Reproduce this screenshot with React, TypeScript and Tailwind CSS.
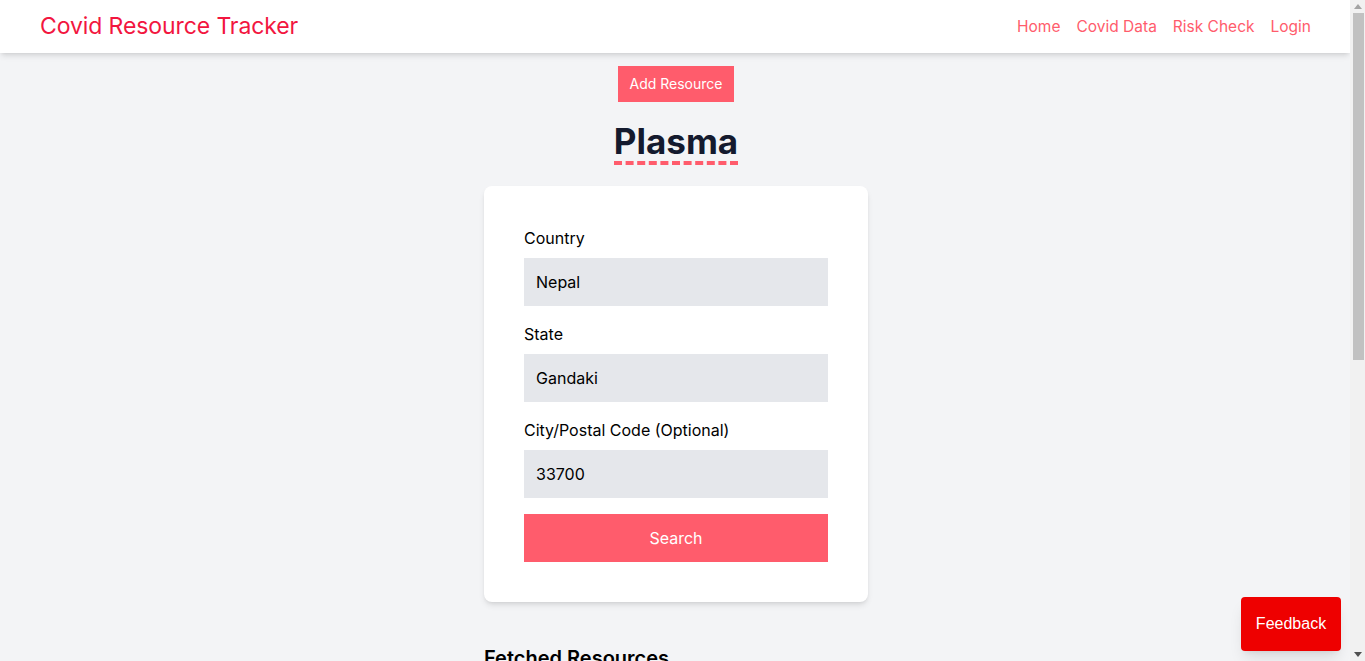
export default function App() {
  const fields = [
    { label: 'Country', value: 'Nepal' },
    { label: 'State', value: 'Gandaki' },
    { label: 'City/Postal Code (Optional)', value: '33700' },
  ];

  return (
    <div className="h-screen flex overflow-hidden bg-gray-100 font-['Inter',sans-serif]">
      <div className="flex-1 relative overflow-hidden">
        {/* Navbar */}
        <nav className="h-[53px] bg-white shadow-md flex items-center justify-between pl-10 pr-[39px]">
          <div className="text-[23px] text-[#f2163f] tracking-[-0.1px]">Covid Resource Tracker</div>
          <div className="flex items-center gap-4 text-[15.5px] text-[#ff5c6c]">
            <a>Home</a>
            <a>Covid Data</a>
            <a>Risk Check</a>
            <a>Login</a>
          </div>
        </nav>

        <main className="flex flex-col items-center pt-[13px] pl-[2px]">
          <button className="h-[36px] px-3 bg-[#ff5c6c] text-white text-sm">Add Resource</button>
          <h1 className="mt-[19px] text-[35px] font-bold text-[#141a2e] leading-[40px] border-b-4 border-dashed border-[#ff5c6c]">
            Plasma
          </h1>

          <div className="mt-[21px] w-96 bg-white rounded-lg shadow-md p-10">
            {fields.map((f, i) => (
              <div key={f.label} className={i > 0 ? 'mt-4' : ''}>
                <label className="block text-base text-black leading-6 mb-2">{f.label}</label>
                <div className="h-12 bg-gray-200 flex items-center px-3 text-base text-black">{f.value}</div>
              </div>
            ))}
            <button className="mt-4 w-full h-12 bg-[#ff5c6c] text-white text-base">Search</button>
          </div>

          <div className="w-96 mt-10">
            <h2 className="text-xl font-semibold text-black leading-7 pt-[2px]">Fetched Resources</h2>
          </div>
        </main>

        <button className="absolute right-[9px] bottom-[10px] w-[100px] h-[54px] bg-[#ee0000] text-white text-base font-['Liberation_Sans',Arial,sans-serif] rounded-sm shadow-lg">
          Feedback
        </button>
      </div>

      {/* Scrollbar */}
      <div className="w-[15px] bg-[#f1f1f1] flex flex-col items-center">
        <div className="h-[13px] flex items-center justify-center">
          <svg width="8" height="5" viewBox="0 0 8 5"><path d="M0 5 L4 0 L8 5 Z" fill="#a3a3a3" /></svg>
        </div>
        <div className="w-[11px] h-[347px] ml-[2px] bg-[#c1c1c1]" />
        <div className="flex-1" />
        <div className="h-[13px] flex items-center justify-center">
          <svg width="8" height="5" viewBox="0 0 8 5"><path d="M0 0 L8 0 L4 5 Z" fill="#505050" /></svg>
        </div>
      </div>
    </div>
  );
}
